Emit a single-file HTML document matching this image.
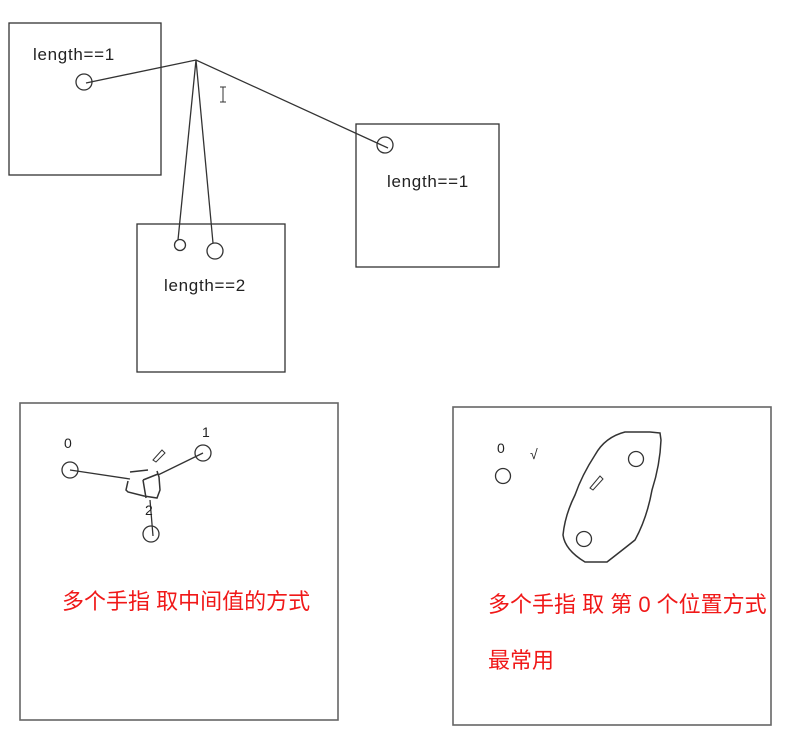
<!DOCTYPE html>
<html><head><meta charset="utf-8"><style>
html,body{margin:0;padding:0;background:#fff;}
svg{display:block;}
.t{font-family:"Liberation Sans","DejaVu Sans",sans-serif;font-size:17px;letter-spacing:0.7px;fill:#222;}
.n{font-family:"Liberation Sans","DejaVu Sans",sans-serif;font-size:14px;fill:#222;}
.c{font-family:"Liberation Sans","Noto Sans CJK SC",sans-serif;font-size:22px;fill:#f01818;stroke:#fff;stroke-width:3px;paint-order:stroke;}
</style></head><body>
<svg width="787" height="748" viewBox="0 0 787 748" xmlns="http://www.w3.org/2000/svg">
<rect width="787" height="748" fill="#fff"/>
<g fill="none" stroke="#333" stroke-width="1.3">
<rect x="9" y="23" width="152" height="152"/>
<rect x="356" y="124" width="143" height="143"/>
<rect x="137" y="224" width="148" height="148"/>
<circle cx="84" cy="82" r="8"/>
<circle cx="385" cy="145" r="8"/>
<circle cx="180" cy="245" r="5.5"/>
<circle cx="215" cy="251" r="8"/>
<path d="M86 83 L196 60 L388 148 M196 60 L178 240 M196 60 L213 243"/>
<path d="M220 87 h6 M223 87 v15 M220 102 h6" stroke-width="1"/>
<rect x="20" y="403" width="318" height="317" stroke="#666" stroke-width="1.6"/>
<rect x="453" y="407" width="318" height="318" stroke="#666" stroke-width="1.6"/>
<circle cx="70" cy="470" r="8"/>
<circle cx="203" cy="453" r="8"/>
<circle cx="151" cy="534" r="8"/>
<path d="M70 470 L130 479 M203 453 L158 475 M150 500 L153 536"/>
<path d="M130 472 L148 470 M128 481 L126 490 L128 492 L144 496 L157 498 L160 490 L159 477 L157 471 M143 480 L158 474 M143 480 L146 498" stroke-width="1.5"/>
<path d="M153 460 L162 450 L165 453 L156 462 Z" stroke-width="1"/>
<circle cx="503" cy="476" r="7.5"/>
<circle cx="636" cy="459" r="7.5"/>
<circle cx="584" cy="539" r="7.5"/>
<path d="M660 433 L650 432 L625 432 Q605 437 595 455 Q582 475 575 495 Q565 515 563 535 Q565 550 585 562 L607 562 Q625 548 635 540 Q647 518 652 490 Q660 465 661 440 Z" stroke-width="1.5"/>
<path d="M590 488 L600 476 L603 479 L593 490 Z" stroke-width="1"/>
</g>
<text class="t" x="33" y="60">length==1</text>
<text class="t" x="387" y="187">length==1</text>
<text class="t" x="164" y="291">length==2</text>
<text class="n" x="64" y="448">0</text>
<text class="n" x="202" y="437">1</text>
<text class="n" x="145" y="515">2</text>
<text class="n" x="497" y="453">0</text>
<text class="n" x="530" y="459" font-size="13">√</text>
<text class="c" x="62" y="609">多个手指 取中间值的方式</text>
<text class="c" x="488" y="612">多个手指 取 第 0 个位置方式</text>
<text class="c" x="488" y="668">最常用</text>
</svg>
</body></html>
